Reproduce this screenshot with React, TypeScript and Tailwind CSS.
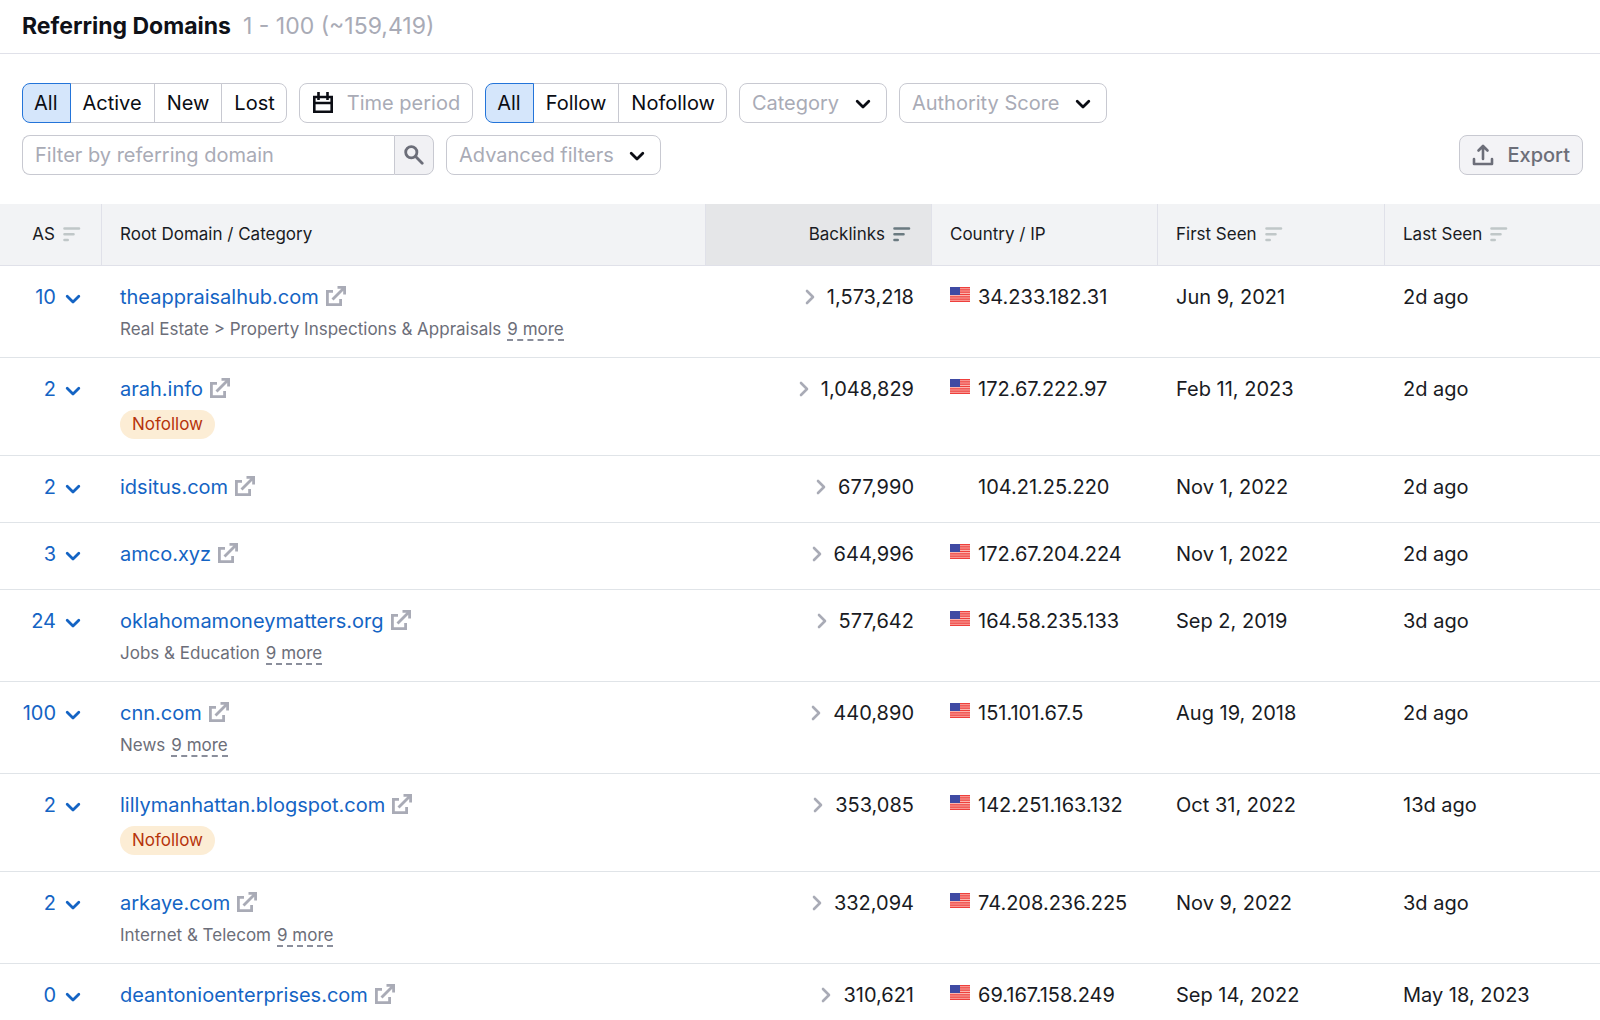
import { useState } from 'react';

type Row = {
  score: number;
  domain: string;
  category?: string;
  nofollow?: boolean;
  backlinks: string;
  flag: boolean;
  ip: string;
  first: string;
  last: string;
};

const rows: Row[] = [
  { score: 10, domain: 'theappraisalhub.com', category: 'Real Estate > Property Inspections & Appraisals', backlinks: '1,573,218', flag: true, ip: '34.233.182.31', first: 'Jun 9, 2021', last: '2d ago' },
  { score: 2, domain: 'arah.info', nofollow: true, backlinks: '1,048,829', flag: true, ip: '172.67.222.97', first: 'Feb 11, 2023', last: '2d ago' },
  { score: 2, domain: 'idsitus.com', backlinks: '677,990', flag: false, ip: '104.21.25.220', first: 'Nov 1, 2022', last: '2d ago' },
  { score: 3, domain: 'amco.xyz', backlinks: '644,996', flag: true, ip: '172.67.204.224', first: 'Nov 1, 2022', last: '2d ago' },
  { score: 24, domain: 'oklahomamoneymatters.org', category: 'Jobs & Education', backlinks: '577,642', flag: true, ip: '164.58.235.133', first: 'Sep 2, 2019', last: '3d ago' },
  { score: 100, domain: 'cnn.com', category: 'News', backlinks: '440,890', flag: true, ip: '151.101.67.5', first: 'Aug 19, 2018', last: '2d ago' },
  { score: 2, domain: 'lillymanhattan.blogspot.com', nofollow: true, backlinks: '353,085', flag: true, ip: '142.251.163.132', first: 'Oct 31, 2022', last: '13d ago' },
  { score: 2, domain: 'arkaye.com', category: 'Internet & Telecom', backlinks: '332,094', flag: true, ip: '74.208.236.225', first: 'Nov 9, 2022', last: '3d ago' },
  { score: 0, domain: 'deantonioenterprises.com', backlinks: '310,621', flag: true, ip: '69.167.158.249', first: 'Sep 14, 2022', last: 'May 18, 2023' },
];

function ChevronDown({ className }: { className?: string }) {
  return (
    <svg viewBox="0 0 16 10" className={className} fill="none" stroke="currentColor" strokeWidth="2.8" strokeLinecap="round" strokeLinejoin="round" aria-hidden="true">
      <path d="M2.2 2.2L8 8l5.8-5.8" />
    </svg>
  );
}

function ChevronRight() {
  return (
    <svg viewBox="0 0 10 16" className="h-4 w-[10px] text-[#a9abb6]" fill="none" stroke="currentColor" strokeWidth="2.6" strokeLinecap="round" strokeLinejoin="round" aria-hidden="true">
      <path d="M2 2l6 6-6 6" />
    </svg>
  );
}

function SortIcon({ active }: { active?: boolean }) {
  return (
    <svg viewBox="0 0 18 15" className={active ? 'h-[15px] w-[18px] text-[#6a7a80]' : 'h-[15px] w-[18px] text-[#c0c7c8]'} stroke="currentColor" strokeWidth="2.6" strokeLinecap="round" aria-hidden="true">
      <path d="M1.5 1.5h14.5M1.5 7.3h9M1.5 13h3.2" />
    </svg>
  );
}

function ExternalIcon() {
  return (
    <svg viewBox="0 0 20 22" className="h-[22px] w-5 text-[#a9abb6]" fill="none" stroke="currentColor" strokeWidth="2.8" aria-hidden="true">
      <path d="M7 5.4H1.4v13.2h13.2V13" />
      <path d="M6.5 13.5L17 3" />
      <path d="M11.5 1.4h7.1v7.1" />
      <path d="M14 1h5v5z" fill="currentColor" stroke="none" />
    </svg>
  );
}

function UsFlag() {
  return (
    <svg viewBox="0 0 20 15" className="h-[15px] w-5" role="img" aria-label="United States">
      <rect width="20" height="15" fill="#fbb5ae" />
      <path d="M0 .6h20M0 2.9h20M0 5.2h20M0 7.5h20M0 9.8h20M0 12.1h20M0 14.4h20" stroke="#ee3f3c" strokeWidth="1.2" />
      <rect width="10" height="8" fill="#3f4aa3" />
    </svg>
  );
}

function Segmented({ label, options }: { label: string; options: string[] }) {
  const [selected, setSelected] = useState(options[0]);
  return (
    <div role="group" aria-label={label} className="flex h-10">
      {options.map((option) => (
        <button
          key={option}
          type="button"
          aria-pressed={selected === option}
          onClick={() => setSelected(option)}
          className={
            selected === option
              ? 'relative -mr-px border border-[#2374d9] bg-[#d5e6fb] px-3 first:rounded-l-lg first:pl-[11px] last:mr-0 last:rounded-r-lg last:pr-[11px]'
              : '-mr-px border border-[#c8c9d1] bg-white px-3 first:rounded-l-lg first:pl-[11px] last:mr-0 last:rounded-r-lg last:pr-[11px]'
          }
        >
          {option}
        </button>
      ))}
    </div>
  );
}

function FilterSelect({ label, options }: { label: string; options: string[] }) {
  return (
    <div className="relative h-10">
      <select
        aria-label={label}
        className="h-full appearance-none rounded-lg border border-[#c8c9d1] bg-white pr-[46px] pl-3 text-[#a9abb6]"
      >
        <option>{label}</option>
        {options.map((option) => (
          <option key={option}>{option}</option>
        ))}
      </select>
      <ChevronDown className="pointer-events-none absolute top-4 right-4 h-[10px] w-4 text-[#0b0d14]" />
    </div>
  );
}

function DomainRow({ row }: { row: Row }) {
  return (
    <tr className="align-top [&>td]:h-[67px] [&>td]:border-b [&>td]:border-[#e0e4e8] [&>td]:pt-[17px]">
      <td>
        <button type="button" className="flex w-full items-center justify-end gap-[9px] pr-[21px] leading-7 text-[#1464c4]">
          {row.score}
          <ChevronDown className="mt-1 h-[10px] w-4" />
        </button>
      </td>
      <td className="px-[18px] pb-4">
        <div className="flex items-center gap-[7px] leading-7">
          <a href={`https://${row.domain}`} className="text-[#1464c4]">{row.domain}</a>
          <a href={`https://${row.domain}`} target="_blank" rel="noreferrer" aria-label={`Open ${row.domain}`}>
            <ExternalIcon />
          </a>
        </div>
        {row.category && (
          <div className="mt-[6px] flex h-6 items-baseline gap-[6px] text-[17px] leading-6 text-[#6c6e79]">
            {row.category}
            <button type="button" className="border-b-2 border-dashed border-[#8a8e9b] leading-5">
              9 more
            </button>
          </div>
        )}
        {row.nofollow && (
          <span className="mt-[7px] flex h-[29px] w-fit items-center rounded-full bg-[#fcedd5] px-3 text-[17px] text-[#b6340c]">
            Nofollow
          </span>
        )}
      </td>
      <td className="px-[18px]">
        <div className="flex items-center justify-end gap-3 leading-7">
          <ChevronRight />
          {row.backlinks}
        </div>
      </td>
      <td className="px-[18px]">
        <div className="flex items-center gap-2 leading-7">
          <span className="flex h-5 w-5">{row.flag && <UsFlag />}</span>
          {row.ip}
        </div>
      </td>
      <td className="px-[18px] leading-7">{row.first}</td>
      <td className="px-[18px] leading-7">{row.last}</td>
    </tr>
  );
}

export default function App() {
  return (
    <main className="h-screen overflow-hidden bg-white font-['Inter',sans-serif] text-[20px] text-[#191b23]">
      <header className="flex h-[54px] items-center gap-3 border-b border-[#e0e1e9] px-[22px]">
        <h1 className="text-[23px] font-bold text-[#0f1118]">Referring Domains</h1>
        <span className="text-[23px] text-[#a9abb6]">1 - 100 (~159,419)</span>
      </header>

      <div className="flex flex-wrap gap-3 px-[22px] pt-[29px] text-[#0b0d14]">
        <Segmented label="Status" options={['All', 'Active', 'New', 'Lost']} />
        <button type="button" className="flex h-10 items-center gap-[13px] rounded-lg border border-[#c8c9d1] px-3 text-[#a9abb6]">
          <svg viewBox="0 0 22 22" className="h-[22px] w-[22px] text-[#0b0d14]" fill="none" stroke="currentColor" strokeWidth="2.6" aria-hidden="true">
            <path d="M2.3 5h17.4v14.7H2.3zM2 11h18M6.5 0v8M15.5 0v8" />
          </svg>
          Time period
        </button>
        <Segmented label="Link type" options={['All', 'Follow', 'Nofollow']} />
        <FilterSelect label="Category" options={['News']} />
        <FilterSelect label="Authority Score" options={['0-10']} />
      </div>

      <div className="flex items-center gap-3 px-[22px] pt-3 pr-[17px] pb-[29px]">
        <form className="flex h-10 w-[412px]" onSubmit={(e) => e.preventDefault()}>
          <input
            type="text"
            aria-label="Filter by referring domain"
            placeholder="Filter by referring domain"
            className="min-w-0 flex-1 rounded-l-lg border border-r-0 border-[#c8c9d1] px-3 placeholder:text-[#a9abb6]"
          />
          <button type="submit" aria-label="Search" className="flex w-10 items-center justify-center rounded-r-lg border border-[#c8c9d1] bg-[#f1f1f4]">
            <svg viewBox="0 0 20 20" className="h-5 w-5 text-[#6c6e79]" fill="none" stroke="currentColor" strokeWidth="2.8" strokeLinecap="round" aria-hidden="true">
              <circle cx="7.3" cy="7.3" r="5.6" />
              <path d="M11.6 11.6l6.6 6.6" />
            </svg>
          </button>
        </form>
        <FilterSelect label="Advanced filters" options={['Anchor']} />
        <button type="button" className="ml-auto flex h-10 items-center gap-[13px] rounded-lg border border-[#c8c9d1] bg-[#f3f3f6] px-3 font-medium text-[#6c6e79]">
          <svg viewBox="0 0 22 22" className="h-[22px] w-[22px]" fill="none" stroke="currentColor" strokeWidth="2.6" strokeLinecap="round" strokeLinejoin="round" aria-hidden="true">
            <path d="M11 15V3M6.5 6.5L11 2l4.5 4.5M2 15v5h18v-5" />
          </svg>
          Export
        </button>
      </div>

      <table className="w-full table-fixed border-separate border-spacing-0">
        <colgroup>
          <col className="w-[102px]" />
          <col />
          <col className="w-[227px]" />
          <col className="w-[226px]" />
          <col className="w-[227px]" />
          <col className="w-[215px]" />
        </colgroup>
        <thead>
          <tr className="bg-[#f2f3f5] text-left text-[17px] [&>th]:h-[62px] [&>th]:border-b [&>th]:border-[#e0e1e9] [&>th]:font-normal">
            <th scope="col" className="border-r pr-5">
              <button type="button" className="flex w-full items-center justify-end gap-2">
                AS <SortIcon />
              </button>
            </th>
            <th scope="col" className="px-[18px]">Root Domain / Category</th>
            <th scope="col" className="border-x bg-[#e5e6e8] pr-5 pl-[18px]">
              <button type="button" className="flex w-full items-center justify-end gap-2">
                Backlinks <SortIcon active />
              </button>
            </th>
            <th scope="col" className="border-r px-[18px]">Country / IP</th>
            <th scope="col" className="border-r px-[18px]">
              <button type="button" className="flex items-center gap-2">
                First Seen <SortIcon />
              </button>
            </th>
            <th scope="col" className="px-[18px]">
              <button type="button" className="flex items-center gap-2">
                Last Seen <SortIcon />
              </button>
            </th>
          </tr>
        </thead>
        <tbody>
          {rows.map((row) => (
            <DomainRow key={row.domain} row={row} />
          ))}
        </tbody>
      </table>
    </main>
  );
}
